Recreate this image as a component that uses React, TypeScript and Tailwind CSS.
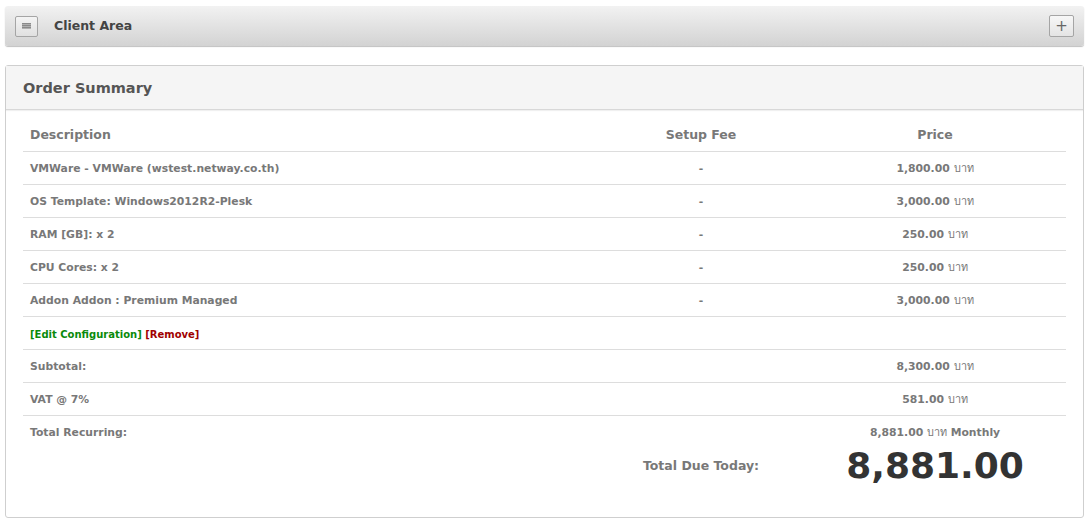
import React from "react";

const items = [
  { desc: "VMWare - VMWare (wstest.netway.co.th)", fee: "-", price: "1,800.00" },
  { desc: "OS Template: Windows2012R2-Plesk", fee: "-", price: "3,000.00" },
  { desc: "RAM [GB]: x 2", fee: "-", price: "250.00" },
  { desc: "CPU Cores: x 2", fee: "-", price: "250.00" },
  { desc: "Addon Addon : Premium Managed", fee: "-", price: "3,000.00" },
];

const Baht = () => <span className="font-normal">บาท</span>;

const App = () => {
  return (
    <div className="w-[1089px] h-[519px] bg-white font-['DejaVu_Sans',sans-serif] overflow-hidden">
      <div className="mx-[5px] pt-[6px]">
        <div className="h-[40px] rounded-[3px] bg-gradient-to-b from-[#f2f2f2] to-[#d3d3d3] shadow-[0_1px_1px_rgba(0,0,0,0.25)] flex items-center px-[10px]">
          <button className="w-[23px] h-[21px] border border-[#a5a5a5] rounded-[2px] bg-gradient-to-b from-[#f4f4f4] to-[#e0e0e0] flex items-center justify-center">
            <span className="w-[9px] h-[6px] bg-[repeating-linear-gradient(to_bottom,#8a8a8a_0,#8a8a8a_1px,#b0b0b0_1px,#b0b0b0_2px)]"></span>
          </button>
          <div className="ml-[16px] text-[12.5px] font-bold text-[#444]">Client Area</div>
          <button className="ml-auto w-[25px] h-[22px] border border-[#a5a5a5] rounded-[2px] bg-gradient-to-b from-[#f7f7f7] to-[#e4e4e4] flex items-center justify-center text-[#666] text-[15px] leading-none">
            +
          </button>
        </div>

        <div className="mt-[19px] h-[453px] border border-[#cfcfcf] rounded-[3px]">
          <div className="h-[44px] bg-[#f5f5f5] border-b border-[#d8d8d8] shadow-[0_1px_1px_rgba(0,0,0,0.06)] flex items-center pt-[3px] px-[17px] text-[14.5px] font-bold text-[#555]">
            Order Summary
          </div>
          <div className="px-[17px] pt-[8px]">
            <table className="w-full table-fixed border-collapse text-[10.8px] font-bold text-[#787878]">
              <colgroup>
                <col className="w-[575px]" />
                <col className="w-[206px]" />
                <col />
              </colgroup>
              <thead>
                <tr className="h-[33px] border-b border-[#ddd] text-[12.5px]">
                  <th className="text-left pl-[7px] pt-[2px]">Description</th>
                  <th className="pt-[2px]">Setup Fee</th>
                  <th className="pt-[2px]">Price</th>
                </tr>
              </thead>
              <tbody className="[&_td]:pt-[3px]">
                {items.map((it) => (
                  <tr key={it.desc} className="h-[33px] border-b border-[#ddd]">
                    <td className="pl-[7px]">{it.desc}</td>
                    <td className="text-center">{it.fee}</td>
                    <td className="text-center">
                      {it.price} <Baht />
                    </td>
                  </tr>
                ))}
                <tr className="h-[33px] border-b border-[#ddd]">
                  <td className="pl-[7px] text-[10px]" colSpan={3}>
                    <a className="text-[#0a8a0a]">[Edit Configuration]</a>{" "}
                    <a className="text-[#a00000]">[Remove]</a>
                  </td>
                </tr>
                <tr className="h-[33px] border-b border-[#ddd]">
                  <td className="pl-[7px]">Subtotal:</td>
                  <td></td>
                  <td className="text-center">
                    8,300.00 <Baht />
                  </td>
                </tr>
                <tr className="h-[33px] border-b border-[#ddd]">
                  <td className="pl-[7px]">VAT @ 7%</td>
                  <td></td>
                  <td className="text-center">
                    581.00 <Baht />
                  </td>
                </tr>
                <tr className="h-[33px]">
                  <td className="pl-[7px]">Total Recurring:</td>
                  <td></td>
                  <td className="text-center">
                    8,881.00 <Baht /> Monthly
                  </td>
                </tr>
                <tr className="h-[30px]">
                  <td></td>
                  <td className="text-center text-[12.5px] !pt-0">Total Due Today:</td>
                  <td className="text-center text-[36px] leading-none text-[#333] !pt-0">8,881.00</td>
                </tr>
              </tbody>
            </table>
          </div>
        </div>
      </div>
    </div>
  );
};

export default App;
